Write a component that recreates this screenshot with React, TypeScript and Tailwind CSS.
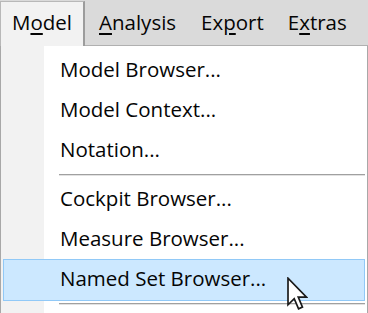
import React from "react";

const Item = ({ label }: { label: string }) => (
  <div className="h-[40px] pl-[57px] leading-[40px] whitespace-nowrap">{label}</div>
);

const Sep = () => (
  <div className="pt-[5px] pb-[2px] pl-[56px]">
    <div className="h-[1px] bg-[#a0a0a0]" />
    <div className="h-[1px] bg-[#e2e2e2]" />
  </div>
);

export default function App() {
  return (
    <div className="relative w-[368px] h-[313px] overflow-hidden bg-[#dadada] text-[#050505] text-[20.5px] font-['Open_Sans','Noto_Sans',sans-serif]">
      <div className="flex h-[46px]">
        <div className="w-[85px] mt-[1px] bg-[#f2f2f2] border-l border-t border-r-2 border-l-[#b8b8b8] border-t-[#b8b8b8] border-r-[#9c9c9c] pl-[11px] pt-[6px] leading-[28px]">
          M<span className="underline underline-offset-[3px]">o</span>del
        </div>
        <div className="flex-1 flex border-b border-[#b0b0b0] pl-[1px] pt-[8px] leading-[28px]">
          <div className="px-[13px]">
            <span className="underline underline-offset-[3px]">A</span>nalysis
          </div>
          <div className="px-[12px]">
            Ex<span className="underline underline-offset-[3px]">p</span>ort
          </div>
          <div className="px-[12px]">
            E<span className="underline underline-offset-[3px]">x</span>tras
          </div>
        </div>
      </div>
      <div className="h-[267px] border-l border-r border-[#a8a8a8] bg-[linear-gradient(to_right,#f2f2f2_43px,#ffffff_43px)] pt-[3px] px-[2px]">
        <Item label="Model Browser..." />
        <Item label="Model Context..." />
        <Item label="Notation..." />
        <Sep />
        <Item label="Cockpit Browser..." />
        <Item label="Measure Browser..." />
        <div className="mt-[1px] h-[42px] border border-[#91c9f7] bg-[#cce8ff] pl-[56px] leading-[36px] whitespace-nowrap">
          Named Set Browser...
        </div>
        <div className="pt-[2px] pl-[56px]">
          <div className="h-[1px] bg-[#a0a0a0]" />
          <div className="h-[1px] bg-[#e2e2e2]" />
        </div>
      </div>
      <svg
        className="absolute left-[287px] top-[277px]"
        width="21"
        height="34"
        viewBox="0 0 12.5 20"
      >
        <path
          d="M0.6 0.6 L0.6 16.4 L4.3 12.8 L6.9 18.8 L9.2 17.8 L6.7 11.9 L11.6 11.9 Z"
          fill="#ffffff"
          stroke="#1a1a1a"
          strokeWidth="1"
          strokeLinejoin="miter"
        />
      </svg>
    </div>
  );
}
